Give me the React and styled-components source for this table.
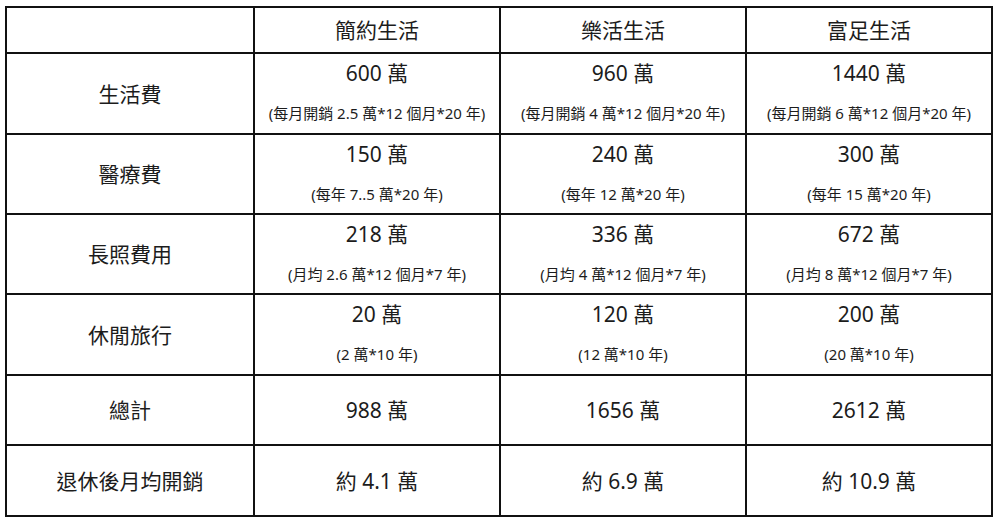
import React from 'react';
import styled, { createGlobalStyle } from 'styled-components';

const GlobalStyle = createGlobalStyle`
  html, body {
    margin: 0;
    padding: 0;
    background: #ffffff;
  }
  body {
    font-family: "Noto Sans", "Noto Sans CJK TC", sans-serif;
    color: #1c1c1c;
  }
`;

const Page = styled.div`
  padding: 6px 0 0 5px;
`;

const Table = styled.table`
  border-collapse: collapse;
  table-layout: fixed;
  width: 986px;
  border: 2px solid #111;
`;

const Row = styled.tr`
  height: ${(p) => p.$h}px;
`;

const Cell = styled.td`
  border: 2px solid #111;
  padding: 0;
  text-align: center;
  vertical-align: middle;
  font-size: 21px;
  line-height: 28px;
`;

const Stack = styled.div`
  display: flex;
  flex-direction: column;
  align-items: center;
  gap: 16px;
  padding-bottom: 5px;
`;

const Main = styled.div`
  font-size: 21px;
  line-height: 28px;
`;

const Sub = styled.div`
  font-size: 15px;
  line-height: 20px;
`;

const plans = ['簡約生活', '樂活生活', '富足生活'];

const rows = [
  {
    label: '生活費',
    h: 81,
    cells: [
      ['600 萬', '(每月開銷 2.5 萬*12 個月*20 年)'],
      ['960 萬', '(每月開銷 4 萬*12 個月*20 年)'],
      ['1440 萬', '(每月開銷 6 萬*12 個月*20 年)'],
    ],
  },
  {
    label: '醫療費',
    h: 80,
    cells: [
      ['150 萬', '(每年 7..5 萬*20 年)'],
      ['240 萬', '(每年 12 萬*20 年)'],
      ['300 萬', '(每年 15 萬*20 年)'],
    ],
  },
  {
    label: '長照費用',
    h: 80,
    cells: [
      ['218 萬', '(月均 2.6 萬*12 個月*7 年)'],
      ['336 萬', '(月均 4 萬*12 個月*7 年)'],
      ['672 萬', '(月均 8 萬*12 個月*7 年)'],
    ],
  },
  {
    label: '休閒旅行',
    h: 81,
    cells: [
      ['20 萬', '(2 萬*10 年)'],
      ['120 萬', '(12 萬*10 年)'],
      ['200 萬', '(20 萬*10 年)'],
    ],
  },
  { label: '總計', h: 70, cells: [['988 萬'], ['1656 萬'], ['2612 萬']] },
  { label: '退休後月均開銷', h: 71, cells: [['約 4.1 萬'], ['約 6.9 萬'], ['約 10.9 萬']] },
];

export default function App() {
  return (
    <Page>
      <GlobalStyle />
      <Table>
        <colgroup>
          <col style={{ width: 248 }} />
          <col style={{ width: 246 }} />
          <col style={{ width: 246 }} />
          <col style={{ width: 246 }} />
        </colgroup>
        <tbody>
          <Row $h={46}>
            <Cell />
            {plans.map((p) => (
              <Cell key={p}>{p}</Cell>
            ))}
          </Row>
          {rows.map((r) => (
            <Row key={r.label} $h={r.h}>
              <Cell>{r.label}</Cell>
              {r.cells.map(([main, sub], i) => (
                <Cell key={i}>
                  {sub ? (
                    <Stack>
                      <Main>{main}</Main>
                      <Sub>{sub}</Sub>
                    </Stack>
                  ) : (
                    main
                  )}
                </Cell>
              ))}
            </Row>
          ))}
        </tbody>
      </Table>
    </Page>
  );
}
